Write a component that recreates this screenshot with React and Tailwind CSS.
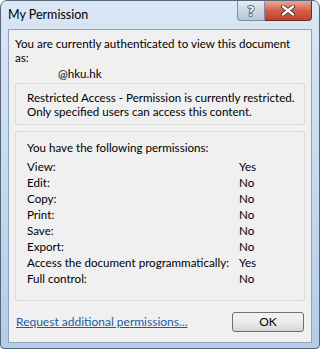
import React from "react";

const rows = [
  ["View:", "Yes"],
  ["Edit:", "No"],
  ["Copy:", "No"],
  ["Print:", "No"],
  ["Save:", "No"],
  ["Export:", "No"],
  ["Access the document programmatically:", "Yes"],
  ["Full control:", "No"],
];

const font = { fontFamily: 'Lato, "Noto Sans", sans-serif' };

export default function App() {
  return (
    <div
      className="w-[320px] h-[349px] relative rounded-t-[7px] rounded-b-[4px] border border-[#56677b] bg-gradient-to-b from-[#dae7f4] via-[#c6daef] to-[#b4cde8] flex flex-col text-[11.6px] text-black"
      style={font}
    >
      {/* title bar */}
      <div className="h-[28px] flex items-start relative">
        <span className="ml-[7px] mt-[6px] leading-[16px] text-[12.5px] text-black">My Permission</span>
        <div className="absolute right-[7px] top-0 flex">
          <div className="w-[28px] h-[20px] rounded-bl-[4px] border border-t-0 border-[#7d8ea3] bg-gradient-to-b from-[#e4ecf5] via-[#ccd8e5] to-[#b6c6d8] flex items-center justify-center">
            <svg width="14" height="16" viewBox="0 0 14 16">
              <text
                x="7"
                y="13"
                textAnchor="middle"
                fontSize="14"
                fontWeight="700"
                fontFamily="Lato, sans-serif"
                fill="#ffffff"
                stroke="#55657a"
                strokeWidth="2"
                paintOrder="stroke"
              >
                ?
              </text>
            </svg>
          </div>
          <div className="w-[47px] h-[20px] rounded-br-[4px] border border-t-0 border-l-0 border-[#6b2a1e] bg-gradient-to-b from-[#e9a99b] via-[#d2604a] to-[#c2412a] flex items-center justify-center">
            <svg width="14" height="11" viewBox="0 0 14 11">
              <path d="M2 1.5 L12 9.5 M12 1.5 L2 9.5" stroke="#3a2520" strokeWidth="4" strokeLinecap="round" />
              <path d="M2 1.5 L12 9.5 M12 1.5 L2 9.5" stroke="#ffffff" strokeWidth="2.4" strokeLinecap="round" />
            </svg>
          </div>
        </div>
      </div>

      {/* client area */}
      <div className="mx-[7px] mb-[5px] flex-1 border border-[#8fa3bb] bg-[#f0f0f0] flex flex-col whitespace-nowrap">
        <div className="pl-[6px] pr-[6px] pt-[7px] leading-[14px]">
          <p>You are currently authenticated to view this document</p>
          <p>as:</p>
          <p className="mt-[2px] pl-[43px]">@hku.hk</p>
        </div>

        <div className="mx-[6px] mt-[2px] border border-[#dcdcdc] rounded-[3px] pl-[11px] pt-[7px] pb-[5px] leading-[14px]">
          <p>Restricted Access - Permission is currently restricted.</p>
          <p>Only specified users can access this content.</p>
        </div>

        <div className="mx-[6px] mt-[6px] border border-[#dcdcdc] rounded-[3px] pl-[11px] pt-[9px] pb-[13px]">
          <p className="leading-[14px] mb-[4px]">You have the following permissions:</p>
          {rows.map(([label, value]) => (
            <div key={label} className="flex h-[16px] leading-[16px]">
              <span className="w-[212px] shrink-0">{label}</span>
              <span>{value}</span>
            </div>
          ))}
        </div>

        <div className="flex items-center justify-between pl-[7px] pr-[7px] mt-[11px]">
          <span className="text-[#1e5b9e] underline leading-[16px] text-[12px]">Request additional permissions...</span>
          <button className="w-[72px] h-[20px] rounded-[3px] border border-[#707070] bg-gradient-to-b from-[#f2f2f2] via-[#ebebeb] to-[#d6d6d6] text-[12px] leading-none">
            OK
          </button>
        </div>
      </div>
    </div>
  );
}
